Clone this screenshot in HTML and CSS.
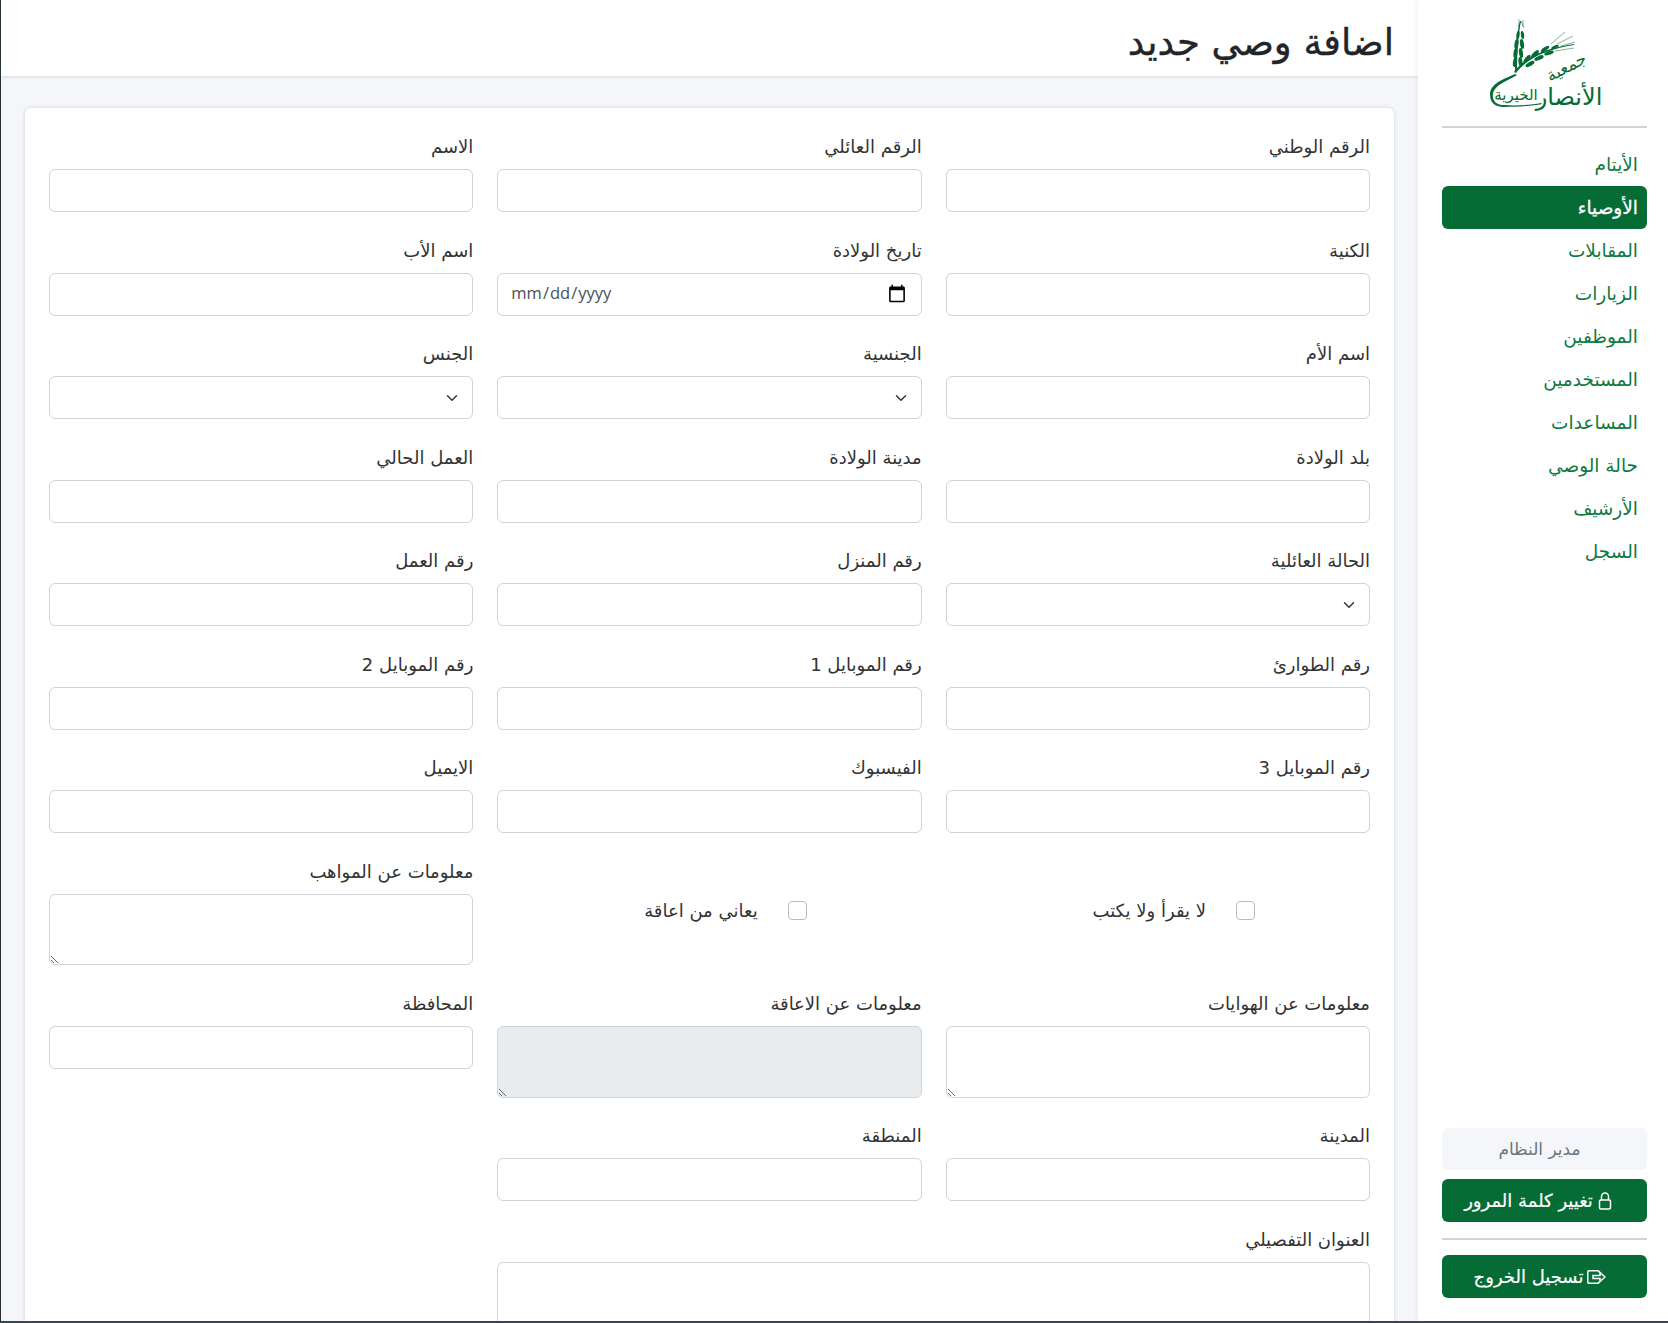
FILE: index.html
```html
<!DOCTYPE html>
<html lang="ar" dir="rtl">
<head><meta charset="utf-8"><title>اضافة وصي جديد</title><link rel="stylesheet" href="styles.css"></head>
<body>
<div class="app">
<aside class="side">
  <div class="logo"><svg width="120" height="96" viewBox="0 0 120 96"><g class="logo-fill"><path d="M30 53C30 36 31 18 35 3l1 0C33 18 32 36 32 53z"/><ellipse cx="30" cy="44" rx="2" ry="5" transform="rotate(8 30 44)"/><ellipse cx="35.500" cy="44" rx="2" ry="5" transform="rotate(-8 35.500 44)"/><ellipse cx="30.500" cy="35" rx="2" ry="5" transform="rotate(8 30.500 35)"/><ellipse cx="36" cy="35" rx="2" ry="5" transform="rotate(-8 36 35)"/><ellipse cx="31.500" cy="26" rx="2" ry="5" transform="rotate(8 31.500 26)"/><ellipse cx="37" cy="26" rx="2" ry="5" transform="rotate(-8 37 26)"/><ellipse cx="33" cy="17" rx="1.600" ry="4" transform="rotate(8 33 17)"/><ellipse cx="37.500" cy="17" rx="1.600" ry="4" transform="rotate(-8 37.500 17)"/><path d="M29 54C40 38 62 30 89 26l0 1C63 31 42 40 31 55z"/><ellipse cx="42" cy="41" rx="5" ry="2" transform="rotate(-50 42 41)"/><ellipse cx="45" cy="46" rx="5" ry="2" transform="rotate(-30 45 46)"/><ellipse cx="50" cy="36" rx="5" ry="2" transform="rotate(-45 50 36)"/><ellipse cx="54" cy="40" rx="5" ry="2" transform="rotate(-25 54 40)"/><ellipse cx="60" cy="31" rx="5" ry="1.800" transform="rotate(-35 60 31)"/><ellipse cx="64" cy="35" rx="5" ry="1.800" transform="rotate(-18 64 35)"/><ellipse cx="70" cy="29" rx="4" ry="1.500" transform="rotate(-25 70 29)"/><path d="M30 56C22 60 6 64 5 76c0 8 4 13 14 13 10 0 30-1 38-3l-1-1C46 87 30 88 20 87 10 87 7 82 8 75c2-8 14-12 24-18z"/></g><g class="logo-awn"><path d="M36 3 33 9M36 3 39 10M34 1 34 8M38 2 38 9M72 26 88 18M76 28 90 24M66 26 80 14M70 33 89 30"/></g><text class="logo-t1" x="84" y="54" transform="rotate(-28 84 54)">جمعية</text><text class="logo-t2" x="84" y="87">الأنصار</text><text class="logo-t3" x="31" y="82">الخيرية</text></svg></div>
  <nav class="nav">
    <a class="nav-item">الأيتام</a>
    <a class="nav-item active">الأوصياء</a>
    <a class="nav-item">المقابلات</a>
    <a class="nav-item">الزيارات</a>
    <a class="nav-item">الموظفين</a>
    <a class="nav-item">المستخدمين</a>
    <a class="nav-item">المساعدات</a>
    <a class="nav-item">حالة الوصي</a>
    <a class="nav-item">الأرشيف</a>
    <a class="nav-item">السجل</a>
  </nav>
  <div class="side-foot">
    <div class="user">مدير النظام</div>
    <a class="btn btn-lock"><svg width="14" height="18" viewBox="0 0 14 18" fill="none" stroke="#fff" stroke-width="1.500"><rect x="1.500" y="8" width="11" height="9" rx="1.500"/><path d="M3.500 8V4.500a3.500 3.500 0 0 1 7 0V8"/></svg>تغيير كلمة المرور</a>
    <hr class="foot-line">
    <a class="btn btn-out"><svg width="19" height="14" viewBox="0 0 19 14" fill="none" stroke="#fff" stroke-width="1.500"><path d="M12 2.500V2a1.200 1.200 0 0 0-1.200-1.200H2A1.200 1.200 0 0 0 .8 2v10A1.200 1.200 0 0 0 2 13.200h8.800A1.200 1.200 0 0 0 12 12v-.5"/><path d="M6 5.500h7V2.500L18 7l-5 4.500V8.500H6z"/></svg>تسجيل الخروج</a>
  </div>
</aside>
<main class="main">
  <header class="head"><h1>اضافة وصي جديد</h1></header>
  <section class="card">
    <div class="grid">
      <div class="f"><label>الرقم الوطني</label><input class="c"></div>
      <div class="f"><label>الرقم العائلي</label><input class="c"></div>
      <div class="f"><label>الاسم</label><input class="c"></div>
      <div class="f"><label>الكنية</label><input class="c"></div>
      <div class="f"><label>تاريخ الولادة</label><input class="c date" type="date" dir="ltr"></div>
      <div class="f"><label>اسم الأب</label><input class="c"></div>
      <div class="f"><label>اسم الأم</label><input class="c"></div>
      <div class="f"><label>الجنسية</label><select class="c sel"></select></div>
      <div class="f"><label>الجنس</label><select class="c sel"></select></div>
      <div class="f"><label>بلد الولادة</label><input class="c"></div>
      <div class="f"><label>مدينة الولادة</label><input class="c"></div>
      <div class="f"><label>العمل الحالي</label><input class="c"></div>
      <div class="f"><label>الحالة العائلية</label><select class="c sel"></select></div>
      <div class="f"><label>رقم المنزل</label><input class="c"></div>
      <div class="f"><label>رقم العمل</label><input class="c"></div>
      <div class="f"><label>رقم الطوارئ</label><input class="c"></div>
      <div class="f"><label>رقم الموبايل 1</label><input class="c"></div>
      <div class="f"><label>رقم الموبايل 2</label><input class="c"></div>
      <div class="f"><label>رقم الموبايل 3</label><input class="c"></div>
      <div class="f"><label>الفيسبوك</label><input class="c"></div>
      <div class="f"><label>الايميل</label><input class="c"></div>
      <div class="chk"><span class="box"></span><span>لا يقرأ ولا يكتب</span></div>
      <div class="chk"><span class="box"></span><span>يعاني من اعاقة</span></div>
      <div class="f"><label>معلومات عن المواهب</label><textarea class="c ta"></textarea></div>
      <div class="f"><label>معلومات عن الهوايات</label><textarea class="c ta"></textarea></div>
      <div class="f"><label>معلومات عن الاعاقة</label><textarea class="c ta off" disabled></textarea></div>
      <div class="f"><label>المحافظة</label><input class="c"></div>
      <div class="f"><label>المدينة</label><input class="c"></div>
      <div class="f"><label>المنطقة</label><input class="c"></div>
      <div class="f"></div>
      <div class="f wide"><label>العنوان التفصيلي</label><textarea class="c ta"></textarea></div>
    </div>
  </section>
</main>
</div>
</body>
</html>
```
FILE: styles.css
```css
* { box-sizing: border-box; }
html, body { margin: 0; height: 100%; overflow: hidden; }
body { font-family: "DejaVu Sans", sans-serif; color: #212529; background: #f5f6fa; font-size: 18px; }
.app { display: flex; height: 1323px; overflow: hidden; border-left: 1px solid #263238; border-bottom: 2px solid #37474f; }
.side { width: 250px; flex: none; background: #fff; padding: 0 21px 23px 24px; display: flex; flex-direction: column; box-shadow: 0 0 8px rgba(0,0,0,.08); z-index: 1; }
.logo { height: 128px; border-bottom: 2px solid #d3d3d3; display: flex; align-items: flex-start; justify-content: center; padding-top: 18px; }
.logo-fill { fill: #056c36; }
.logo-awn { stroke: #056c36; stroke-width: .5; fill: none; }
.logo-t1, .logo-t2, .logo-t3 { fill: #056c36; text-anchor: middle; font-family: "DejaVu Sans", sans-serif; }
.logo-t1 { font-size: 17px; }
.logo-t2 { font-size: 24px; }
.logo-t3 { font-size: 15px; }
.nav { margin-top: 15px; display: flex; flex-direction: column; }
.nav-item { height: 43px; line-height: 43px; padding: 0 9px; color: #0f7a3f; font-size: 18.5px; border-radius: 6px; }
.nav-item.active { background: #056c36; color: #fff; -webkit-text-stroke: .3px #fff; }
.side-foot { margin-top: auto; display: flex; flex-direction: column; }
.user { height: 42px; line-height: 42px; background: #f5f6fa; border-radius: 6px; text-align: center; color: #6c757d; margin-bottom: 9px; padding-right: 10px; font-size: 17px; }
.btn { height: 43px; display: flex; align-items: center; justify-content: center; gap: 5px; background: #056c36; color: #fff; border-radius: 6px; -webkit-text-stroke: .2px #fff; }
.btn-lock { padding-right: 13px; }
.btn-out { gap: 4px; padding-right: 9px; }
.foot-line { width: 100%; margin: 16px 0 15px; border: 0; border-top: 2px solid #d3d3d3; }
.main { flex: 1; min-width: 0; overflow: hidden; }
.head { height: 76px; background: #fff; box-shadow: 0 1px 3px rgba(0,0,0,.12); padding: 10px 24px 0; display: flex; align-items: center; }
.head h1 { margin: 0; font-size: 37px; font-weight: 400; line-height: 1.2; color: #212529; -webkit-text-stroke: .4px #212529; }
.card { margin: 32px 24px 0 24px; background: #fff; border-radius: 6px; box-shadow: 0 0 4px rgba(0,0,0,.15); padding: 25px 24px 24px; height: 1300px; }
.grid { display: grid; grid-template-columns: repeat(3, 1fr); column-gap: 24px; row-gap: 24.5px; align-items: start; }
.f { display: flex; flex-direction: column; gap: 8px; }
.f label { font-size: 18px; line-height: 28px; height: 28px; color: #333; }
.c { display: block; width: 100%; height: 43px; border: 1px solid #ced4da; border-radius: 6px; background: #fff; padding: 6px 12px; font-size: 16px; font-family: inherit; color: #333; }
.date { font-family: "Open Sans", sans-serif; font-size: 16.5px; color: #495057; padding: 4px 14px 8px 12px; }
.date::-webkit-calendar-picker-indicator { width: 20px; height: 20px; padding: 0; margin: 4px 0 0; }
.sel { appearance: none; background-image: url("data:image/svg+xml,%3csvg xmlns='http://www.w3.org/2000/svg' viewBox='0 0 16 16'%3e%3cpath fill='none' stroke='%23343a40' stroke-linecap='round' stroke-linejoin='round' stroke-width='2' d='M2 5l6 6 6-6'/%3e%3c/svg%3e"); background-repeat: no-repeat; background-position: right 12px center; background-size: 16px 12px; }
.ta { height: 71.8px; resize: vertical; }
.off { background: #e9ecef; }
.wide { grid-column: span 2; }
.wide .ta { height: 120px; }
.chk { display: flex; align-items: center; gap: 30px; height: 26px; margin-top: 40px; padding-right: 115px; color: #333; }
.box { width: 19px; height: 19px; border: 1px solid #bbb; border-radius: 4px; background: #fff; flex: none; }
```
